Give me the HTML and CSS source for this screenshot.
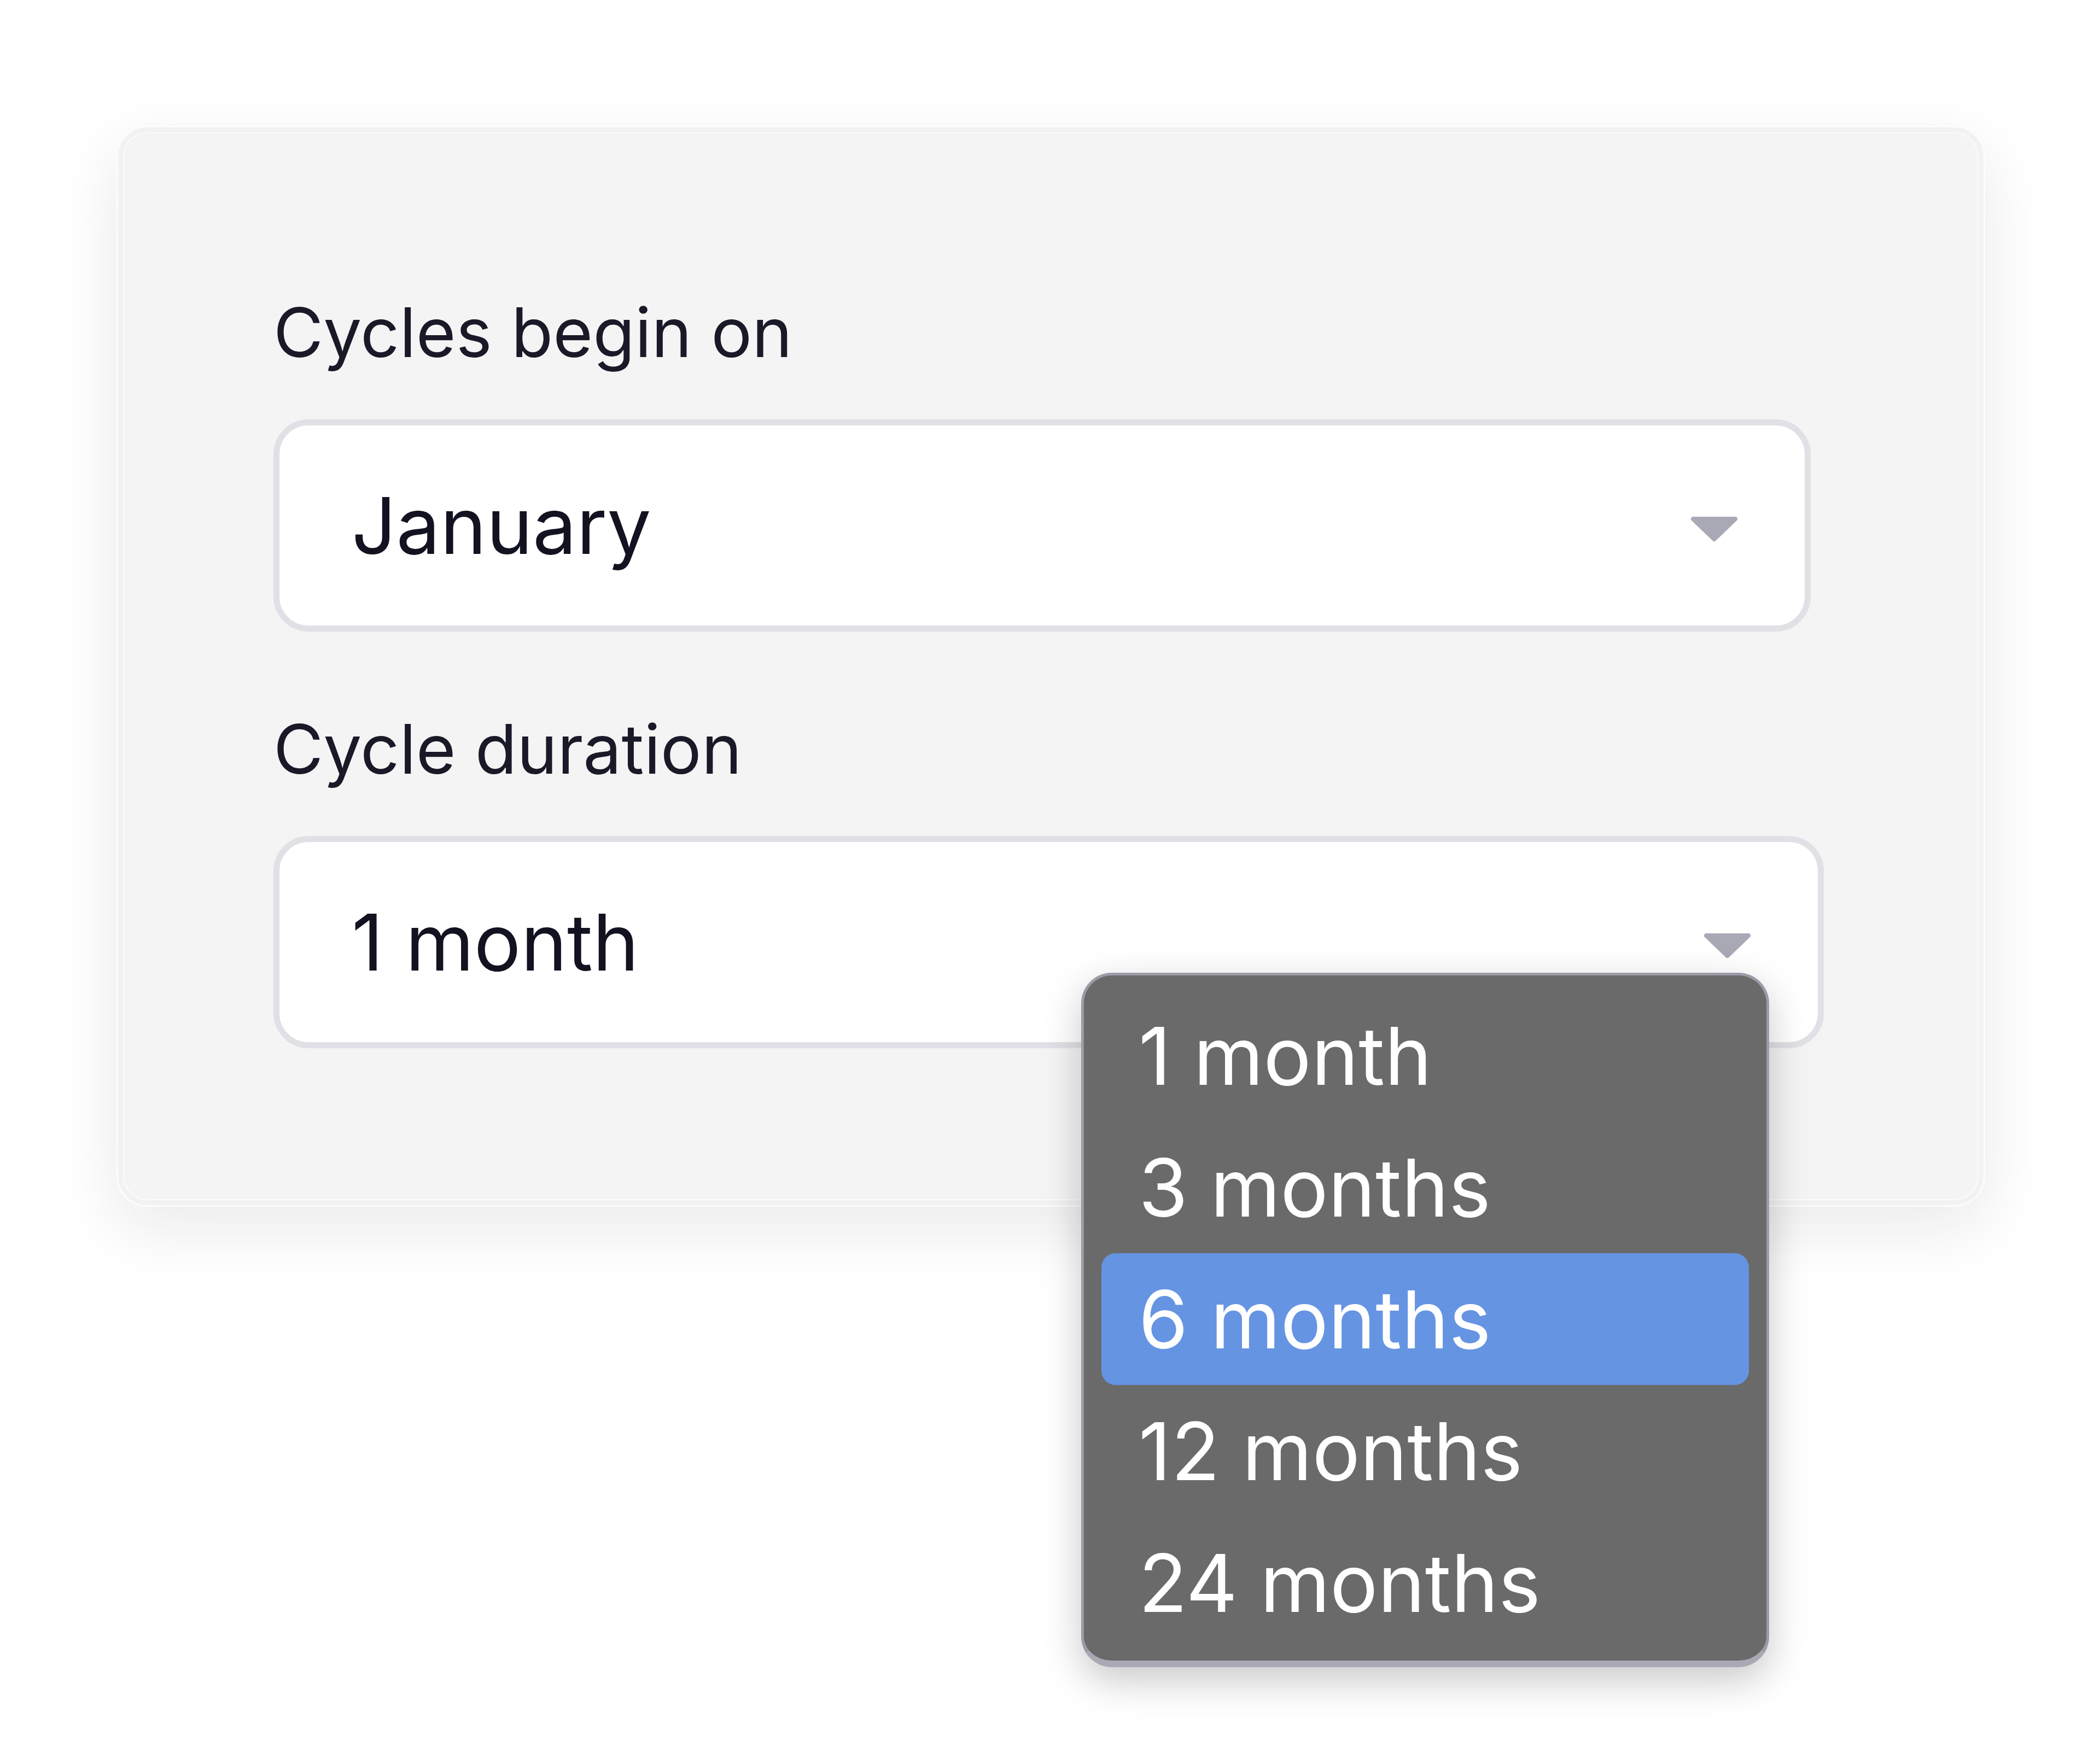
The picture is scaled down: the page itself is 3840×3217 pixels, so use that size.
FILE: index.html
```html
<!DOCTYPE html>
<html lang="en">
<head>
  <meta charset="UTF-8" />
  <meta name="viewport" content="width=device-width, initial-scale=1" />
  <title>Cycle settings</title>
  <link rel="stylesheet" href="styles.css">
</head>
<body>
  <main class="card">
    <div class="field">
      <label class="field-label">Cycles begin on</label>
      <div class="select select-month">
        <span class="select-value">January</span>
        <svg class="caret" width="87" height="47" viewBox="0 0 87 47">
          <polygon points="5,5 82,5 43.5,42" />
        </svg>
      </div>
    </div>

    <div class="field">
      <label class="field-label">Cycle duration</label>
      <div class="select select-duration">
        <span class="select-value">1 month</span>
        <svg class="caret" width="87" height="47" viewBox="0 0 87 47">
          <polygon points="5,5 82,5 43.5,42" />
        </svg>

        <!-- open options list -->
        <ul class="dropdown">
          <li>1 month</li>
          <li>3 months</li>
          <li class="active">6 months</li>
          <li>12 months</li>
          <li>24 months</li>
        </ul>
      </div>
    </div>
  </main>
</body>
</html>
```

FILE: styles.css
```css
body {
  margin: 0;
  min-height: 3217px;
  padding: 230px 0 0 213px;
  box-sizing: border-box;
  background: #fff;
  font-family: Inter, "Noto Sans", sans-serif;
  color: #161624;
}
.card {
  width: 3417px;
  box-sizing: border-box;
  padding: 302px 292px 287px 284px;
  display: flex;
  flex-direction: column;
  gap: 142px;
  background: #f4f4f4;
  border: 3px solid #fcfcfc;
  border-radius: 56px;
  box-shadow:
    inset 0 0 0 9px #f2f2f3,
    inset 0 0 0 11px #fbfbfb,
    0 40px 120px rgba(20, 20, 40, 0.09);
}
.field {
  display: flex;
  flex-direction: column;
  gap: 86px;
}
.field-label {
  font-size: 125px;
  line-height: 146px;
  font-weight: 400;
  color: #191928;
}
.select {
  position: relative;
  display: flex;
  align-items: center;
  height: 388px;
  box-sizing: border-box;
  padding: 0 122px 0 132px;
  background: #fff;
  border: 11px solid #e0e0e6;
  border-radius: 64px;
}
.select-month {
  margin-right: 24px;
}
.select-value {
  font-size: 143px;
  line-height: 174px;
  color: #121220;
}
.caret {
  margin-left: auto;
  margin-top: 12px;
}
.caret polygon {
  fill: #a9a9b6;
  stroke: #a9a9b6;
  stroke-width: 8;
  stroke-linejoin: round;
}
.dropdown {
  position: absolute;
  left: 1466px;
  top: 239px;
  z-index: 10;
  width: 1258px;
  box-sizing: border-box;
  margin: 0;
  padding: 26px 32px 22px;
  list-style: none;
  background: #6a6a6a;
  border: 5px solid #9b9ba8;
  border-bottom: 12px solid #a9a9b5;
  border-radius: 56px;
  box-shadow: 0 24px 70px rgba(0, 0, 0, 0.22);
}
.dropdown li {
  height: 241px;
  display: flex;
  align-items: center;
  padding-left: 68px;
  font-size: 146px;
  color: #fff;
  border-radius: 26px;
}
.dropdown li.active {
  background: #6594e2;
}
```
